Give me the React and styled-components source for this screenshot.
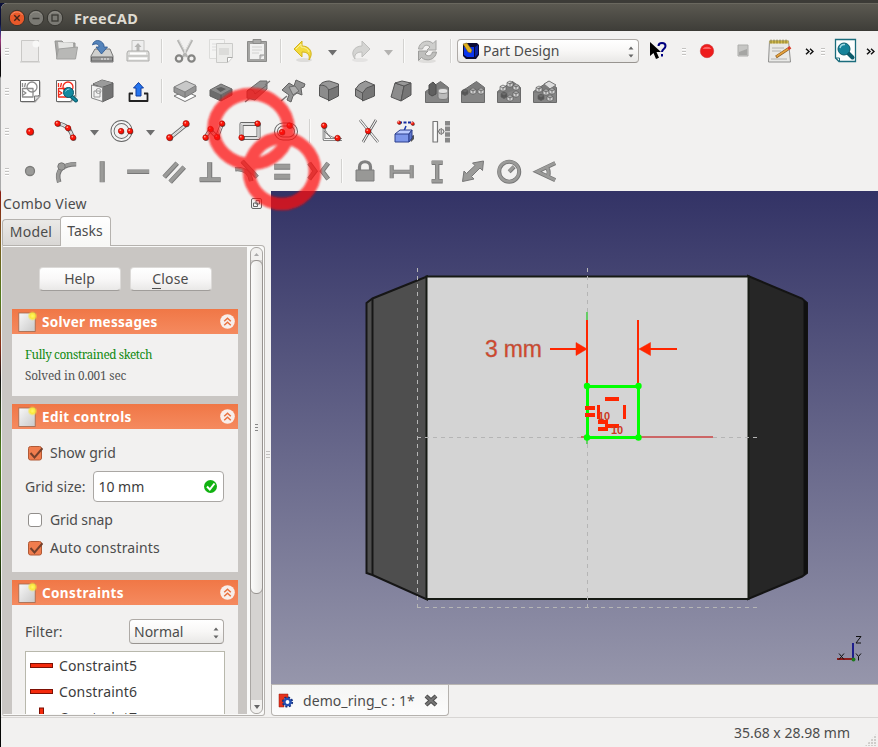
import React from 'react';
import styled, { createGlobalStyle, css } from 'styled-components';

const Global = createGlobalStyle`
  * { box-sizing: border-box; }
  html, body { margin: 0; padding: 0; }
  body { width: 878px; height: 747px; overflow: hidden; background: #f2f1f0; }
  svg { display: block; flex: none; }
`;

const Desktop = styled.div`
  position: relative;
  width: 878px;
  height: 747px;
  padding: 3px 0 0 1px;
  overflow: hidden;
  background: linear-gradient(180deg, #3c3b37 0 3px, #0c1038 3px 24px, #20307a 30px, #a03a80 40px, #090909 62px 76px, #aaa 78px 190px, #8c1c10 192px, #7a5a20 240px, #4f7a1c 300px, #8a3018 345px, #111 380px, #4a7a1a 450px, #3d6b12 520px, #101a08 600px, #050505 747px);
  font-family: "Noto Sans", "Open Sans", sans-serif;
  font-size: 14px;
  color: #4c4c4c;
`;

const Window = styled.div`
  display: flex;
  flex-direction: column;
  width: 877px;
  height: 744px;
  background: #f2f1f0;
  border-radius: 6px 0 0 0;
  overflow: hidden;
`;

const TitleBar = styled.header`
  display: flex;
  align-items: center;
  flex: none;
  height: 28px;
  padding: 0 0 0 7px;
  background: linear-gradient(#5b5951, #3f3e39 96%, #373530);
  border-top: 1px solid #6a685f;
`;

const Title = styled.h1`
  margin: 0 0 0 9px;
  font-size: 14.5px;
  font-weight: 700;
  line-height: 20px;
  letter-spacing: 0.4px;
  color: #dfdbd2;
`;

const Toolbars = styled.div`
  flex: none;
  height: 160px;
`;

const ToolRow = styled.div`
  display: flex;
  align-items: center;
  height: 40px;
`;

const ToolButton = styled.span`
  display: flex;
  flex: none;
  width: ${p => p.$w || 36}px;
  height: 40px;
`;

const Separator = styled.span`
  flex: none;
  width: 2px;
  height: 24px;
  margin: 0 4px 0 5px;
  border-left: 1px solid #d3d2d0;
  border-right: 1px solid #fbfbfa;
`;

const Handle = styled.span`
  flex: none;
  width: 4px;
  height: 8px;
  margin: 2px 3px 0 4px;
  background: repeating-linear-gradient(#c4c3c1 0 1px, #fff 1px 2px, transparent 2px 3px);
`;

const More = styled.span`
  flex: none;
  display: flex;
  align-items: center;
  justify-content: center;
  width: ${p => p.$w}px;
  height: 40px;
  padding-left: ${p => p.$pl || 0}px;
`;

const Combo = styled.div`
  display: flex;
  align-items: center;
  flex: none;
  width: ${p => p.$w}px;
  height: ${p => p.$h}px;
  margin: ${p => p.$m || 0};
  padding: 0 4px;
  gap: 3px;
  border: 1px solid #aeaaa6;
  border-bottom-color: #989490;
  border-radius: 4px;
  background: linear-gradient(#fff, #f8f7f6 50%, #e9e8e6);
`;

const Label = styled.span`
  flex: ${p => (p.$grow ? '1' : 'none')};
  white-space: nowrap;
  line-height: 20px;
  letter-spacing: ${p => p.$ls || 0}px;
  color: ${p => p.$c || '#4c4c4c'};
`;

const Workspace = styled.div`
  display: flex;
  flex: none;
  height: 526px;
`;

const ComboPanel = styled.aside`
  display: flex;
  flex-direction: column;
  flex: none;
  width: 264px;
`;

const PanelTitle = styled.div`
  display: flex;
  justify-content: space-between;
  align-items: center;
  height: 25px;
  padding: 0 2px 0 2px;
`;

const TabStrip = styled.div`
  display: flex;
  align-items: flex-end;
  height: 30px;
  margin-bottom: -1px;
  padding-left: 1px;
`;

const PanelTab = styled.div`
  display: flex;
  justify-content: center;
  align-items: center;
  width: ${p => p.$w}px;
  height: ${p => (p.$active ? 30 : 27)}px;
  padding: 0 1px 2px 0;
  border: 1px solid #b5b2ae;
  border-bottom: 0;
  border-radius: 4px 4px 0 0;
  background: linear-gradient(#eae9e7, #d9d7d5);
  ${p => p.$active && css`
    background: linear-gradient(#fff, #f7f7f5);
    z-index: 1;
  `}
  ${p => !p.$active && css`
    border-right: 0;
    border-radius: 4px 0 0 0;
    border-bottom: 1px solid #b5b2ae;
  `}
`;

const Frame = styled.div`
  display: flex;
  height: 471px;
  margin-left: 1px;
  padding: 1px;
  border: 1px solid #b5b2ae;
  border-left-color: #c8c6c3;
  border-radius: 0 4px 3px 2px;
  background: #f9f9f8;
`;

const ScrollArea = styled.div`
  width: 244px;
  height: 467px;
  margin-right: 3px;
  margin-left: -1px;
  padding: 20px 9px 0;
  overflow: hidden;
  background: #c9c6c3;
`;

const ScrollBar = styled.div`
  display: flex;
  flex-direction: column;
  align-items: center;
  width: 13px;
  height: 467px;
  border: 1px solid #a9a6a3;
  border-radius: 6px;
  background: #d5d3d1;
`;

const ScrollArrow = styled.div`
  display: flex;
  align-items: center;
  justify-content: center;
  width: 11px;
  height: ${p => p.$h}px;
  border-radius: ${p => (p.$up ? '6px 6px 0 0' : '0 0 6px 6px')};
  background: #f2f1ef;
`;

const Thumb = styled.div`
  display: flex;
  align-items: center;
  justify-content: center;
  width: 13px;
  height: 334px;
  border: 1px solid #979390;
  border-radius: 6px;
  background: linear-gradient(90deg, #fbfbfa, #e8e7e5);
`;

const ScrollTrough = styled.div`
  flex: 1;
`;

const Grip = styled.span`
  width: ${p => p.$w || 3}px;
  height: 7px;
  background: repeating-linear-gradient(${p => p.$c || '#777'} 0 1px, transparent 1px 3px);
`;

const ButtonRow = styled.div`
  display: flex;
  gap: 9px;
  margin-bottom: 18px;
  padding-left: 26.5px;
`;

const PushButton = styled.button`
  width: 82px;
  height: 24px;
  padding: 0;
  font: inherit;
  line-height: 20px;
  letter-spacing: ${p => p.$ls || 0}px;
  color: #4c4c4c;
  border: 1px solid #dcdad8;
  border-bottom-color: #a09d9a;
  border-radius: 4px;
  background: linear-gradient(#fff, #f9f8f8 50%, #e9e8e7);
`;

const Mnemonic = styled.span`
  border-bottom: 1px solid #4c4c4c;
`;

const Group = styled.section`
  margin-bottom: 8px;
`;

const GroupHeader = styled.div`
  display: flex;
  align-items: center;
  height: 25px;
  padding: 0 3.5px 0 6px;
  background: linear-gradient(#f07746, #f58a5f);
`;

const GroupTitle = styled.h2`
  flex: 1;
  margin: 0 0 0 5px;
  font-size: 13.5px;
  font-weight: 700;
  line-height: 20px;
  letter-spacing: ${p => p.$ls || 0}px;
  color: #fff;
`;

const GroupBody = styled.div`
  height: ${p => p.$h}px;
  padding: ${p => p.$p};
  background: #f2f1f0;
`;

const Message = styled.p`
  margin: 0;
  font-family: "Noto Serif", "Liberation Serif", serif;
  font-size: 11.8px;
  line-height: 21px;
  letter-spacing: ${p => p.$ls || 0}px;
  color: ${p => p.$c};
`;

const FormRow = styled.div`
  display: flex;
  align-items: center;
  height: ${p => p.$h}px;
  gap: ${p => p.$gap || 0}px;
`;

const Box = styled.span`
  display: block;
  width: 14px;
  height: 14px;
  margin: 0 1px 0 3px;
  border: 1px solid #918e8b;
  border-radius: 3px;
  background: #fff;
`;

const Field = styled.div`
  display: flex;
  align-items: center;
  width: 131px;
  height: 31px;
  padding: 0 6px 0 4px;
  border: 1px solid #aaa7a4;
  border-radius: 4px;
  background: #fff;
`;

const List = styled.div`
  height: 120px;
  width: 200px;
  margin-top: 7px;
  padding: 1px 0 0 4px;
  border: 1px solid #b8b8ac;
  background: #fff;
`;

const Splitter = styled.div`
  display: flex;
  align-items: center;
  justify-content: center;
  flex: none;
  width: 6px;
`;

const MdiArea = styled.main`
  display: flex;
  flex-direction: column;
  width: 607px;
`;

const Viewport = styled.div`
  height: 493px;
  background: linear-gradient(#333366, #9696ab);
`;

const DocTabs = styled.div`
  height: 33px;
  border-top: 1px solid #b9b6b3;
`;

const DocTab = styled.div`
  display: flex;
  align-items: center;
  gap: 9px;
  width: 178px;
  height: 31px;
  padding: 1px 10px 0 6px;
  border: 1px solid #b5b2ae;
  border-top: 0;
  border-radius: 0 0 4px 4px;
  background: linear-gradient(#f5f5f4, #fcfcfc);
`;

const StatusBar = styled.footer`
  display: flex;
  flex: none;
  justify-content: flex-end;
  align-items: center;
  height: 30px;
  border-top: 1px solid #d8d6d4;
`;

const SizeGrip = styled.span`
  align-self: flex-end;
  width: 12px;
  height: 13px;
  margin: 0 1px 1px 15px;
  background: radial-gradient(circle at 1px 1px, #cfcdca 0.9px, transparent 1px) 0 0 / 3px 3px;
  clip-path: polygon(100% 0, 100% 100%, 0 100%);
`;

const Highlight = styled.svg`
  position: absolute;
  left: 200px;
  top: 80px;
  pointer-events: none;
`;

const Ic = ({ children }) => (
  <ToolButton>
    <svg width="36" height="40" viewBox="0 0 36 40" fill="none" strokeLinejoin="round">{children}</svg>
  </ToolButton>
);

const Drop = ({ c = '#6e6e6e' }) => (
  <ToolButton $w={20}>
    <svg width="20" height="40"><path d="M6 19h9l-4.500 5.500z" fill={c} /></svg>
  </ToolButton>
);

const Chevrons = ({ w, pl }) => (
  <More $w={w} $pl={pl}>
    <svg width="9" height="7" fill="none" stroke="#111" strokeWidth="1.500"><path d="M1 .8l3 2.700-3 2.700M5 .8l3 2.700-3 2.700" /></svg>
  </More>
);

const Dot = ({ x, y, r = 2.7 }) => (
  <g>
    <circle cx={x + 0.6} cy={y + 0.8} r={r} fill="#333" opacity=".7" />
    <circle cx={x} cy={y} r={r} fill="#fb1408" stroke="#a00800" strokeWidth=".6" />
    <circle cx={x - 0.7} cy={y - 0.8} r=".9" fill="#ff9c8c" />
  </g>
);

const WindowButton = ({ kind }) => (
  <svg width="19" height="18" viewBox="0 0 19 18" fill="none">
    <circle cx="9" cy="9" r="7.700" fill={kind === 'close' ? '#e9592a' : '#7b7a74'} stroke="#34332e" />
    <path d="M3.500 6a6.500 6.500 0 0 1 11 0" stroke={kind === 'close' ? '#f79a76' : '#99978f'} strokeWidth=".8" />
    {kind === 'close' && <path d="M6.300 6.300l5.400 5.400M11.700 6.300l-5.400 5.400" stroke="#43261a" strokeWidth="1.400" />}
    {kind === 'min' && <path d="M5.500 9.500h7" stroke="#3a3934" strokeWidth="1.300" />}
    {kind === 'max' && <rect x="6" y="6" width="6" height="6" stroke="#3a3934" strokeWidth="1.300" />}
  </svg>
);

const SketchSheet = ({ red }) => (
  <g>
    <path d="M9.500 10.500h19v15l-5 6h-14z" fill="#777" opacity=".6" />
    <path d="M8.500 9.500h19v14l-5 7h-14z" fill="#fff" stroke="#666" />
    <g stroke={red ? '#f22a1a' : '#8c8c8c'} strokeWidth="1.300">
      <circle cx="20" cy="16" r="5" /><path d="M10.500 17.500h10.500v8.500H10.500zM10.500 12v4M13.500 12l-1 4M11 20l3 2-3 2" />
    </g>
    {!red && <path d="M22.500 30v-5h5" fill="#ddd" stroke="#777" />}
  </g>
);

const Magnifier = () => (
  <g>
    <path d="M23 25l5 4.500" stroke="#07596a" strokeWidth="4" strokeLinecap="round" />
    <path d="M23 25l5 4.500" stroke="#1389a0" strokeWidth="2" strokeLinecap="round" />
    <circle cx="20.500" cy="21.500" r="5" fill="#138aa0" stroke="#07596a" />
    <path d="M17.500 20.500a4 4 0 0 1 4-2.500" stroke="#8fd6e2" />
  </g>
);

const Solid = ({ front, side, top }) => (
  <g stroke="#555" strokeWidth="1">
    <path d={front} fill="#8c8c8c" /><path d={side} fill="#767676" /><path d={top} fill="#989898" />
  </g>
);

const Slope = ({ children }) => (
  <g>
    <path d="M6.500 20.500l15-10 8 6v15h-23z" fill="#7c7c7c" stroke="#6a6a6a" />
    <path d="M7 22h9l13-5v14H7z" fill="#858585" />
    {children}
  </g>
);

const Cube = ({ x, y, c = '#d2d2d2' }) => (
  <path d={`M${x} ${y + 1.500}l3-1.500 3 1.500v3.500l-3 1.500-3-1.500zM${x} ${y + 1.500}l3 1.500 3-1.500M${x + 3} ${y + 3}v3.500`} fill={c} stroke="#5e5e5e" strokeWidth=".7" />
);

const Cons = ({ d, w = 3, children }) => (
  <Ic>
    <g strokeLinejoin="miter">
      <path d={d} stroke="#777" strokeWidth={w + 1.6} transform="translate(.2 .2)" />
      <path d={d} stroke="#9b9b99" strokeWidth={w} />
    </g>
    {children}
  </Ic>
);

const ComboArrows = () => (
  <svg width="6" height="14" viewBox="0 0 6 14"><path d="M.5 5.500L3 2.500l2.500 3zM.5 10.500L3 13.500l2.500-3z" fill="#666" /></svg>
);

const PaperIcon = () => (
  <svg width="19" height="23" viewBox="0 0 19 23">
    <defs>
      <linearGradient id="pg" x2="1" y2="1"><stop stopColor="#f8f8f8" /><stop offset="1" stopColor="#c9c9c9" /></linearGradient>
      <radialGradient id="glow"><stop stopColor="#fff96a" /><stop offset=".5" stopColor="#fbe93c" /><stop offset="1" stopColor="#fbe93c" stopOpacity="0" /></radialGradient>
    </defs>
    <rect x=".8" y="3" width="16.400" height="18.500" fill="url(#pg)" stroke="#a0684c" strokeWidth=".8" />
    <circle cx="14.500" cy="6" r="5" fill="url(#glow)" />
  </svg>
);

const CollapseIcon = () => (
  <svg width="15" height="15" viewBox="0 0 15 15" fill="none">
    <circle cx="7.500" cy="7.500" r="7.300" fill="#f8eeea" />
    <path d="M4.200 7.300l3.300-3 3.300 3M4.200 11.300l3.300-3 3.300 3" stroke="#e8713f" strokeWidth="1.500" />
  </svg>
);

const Checked = () => (
  <svg width="18" height="17" viewBox="0 0 18 17" fill="none">
    <rect x="3.500" y="1.500" width="13" height="13.500" rx="2" fill="#f07d4e" stroke="#b05a36" />
    <path d="M5.500 8l4 4.500L17.500 3.200" stroke="#74402c" strokeWidth="2" />
  </svg>
);

const Check = ({ text, on, ls, h }) => (
  <FormRow $h={h} $gap={7}>{on ? <Checked /> : <Box />}<Label $ls={ls}>{text}</Label></FormRow>
);

const TaskGroup = ({ title, ls, h, p, children }) => (
  <Group>
    <GroupHeader><PaperIcon /><GroupTitle $ls={ls}>{title}</GroupTitle><CollapseIcon /></GroupHeader>
    <GroupBody $h={h} $p={p}>{children}</GroupBody>
  </Group>
);

const Constraint = ({ text, vertical }) => (
  <FormRow $h={26} $gap={6}>
    <svg width="23" height="22" viewBox="0 0 23 22">
      {vertical
        ? <rect x="9.500" y="1" width="4" height="20" fill="#f42a0c" stroke="#7d1004" />
        : <rect x=".5" y="8.500" width="22" height="4" fill="#f42a0c" stroke="#7d1004" />}
    </svg>
    <Label $c="#3c3c3c" $ls={0.15}>{text}</Label>
  </FormRow>
);

const FileRow = () => (
  <ToolRow>
    <Handle />
    <Ic><path d="M9.500 9.500h17v21h-17z" fill="#ecebea" stroke="#c9c8c6" /><circle cx="24" cy="13" r="3.500" fill="#f8f8f7" /><path d="M8 31h20" stroke="#c9c9c7" /></Ic>
    <Ic><path d="M7 10h7l2 2h11v15H9z" fill="#a9a9a7" stroke="#949492" /><path d="M10 11l15 1v8H11z" fill="#e5e5e3" /><path d="M10.500 18l19-2-2 12h-19z" fill="#b8b8b6" stroke="#a2a2a0" /></Ic>
    <Ic><path d="M11 18h15l3 7v6H7v-6z" fill="#d0d0ce" stroke="#777" /><path d="M7.500 26h21v4h-21z" fill="#9b9b9b" stroke="#666" /><path d="M17 28h2m1 0h2m1 0h2" stroke="#eee" /><path d="M8.500 14c1-6 9-6 11.500 0v2h3.500L17.500 23 12 16h3c0-3-3-4-6.500-2z" fill="#5584bb" stroke="#2b568d" strokeWidth=".8" /></Ic>
    <Ic><path d="M12 9.500h12v12H12z" fill="#eee" stroke="#c4c4c2" /><path d="M18 12l3.500 4h-2v4h-3v-4h-2z" fill="#b4b4b2" /><path d="M8 20h20l1 2v8H7v-8z" fill="#dededc" stroke="#adadab" /><path d="M10 22.500h16M9 27.500h18" stroke="#fff" strokeWidth="2" /><path d="M8 25h20" stroke="#b5b5b3" /></Ic>
    <Separator />
    <Ic><path d="M11 9l9 17M25 9l-9 17" stroke="#b5b5b3" strokeWidth="2.600" /><path d="M12 9l7 13M24 9l-7 13" stroke="#e2e2e0" /><circle cx="12" cy="27.500" r="3.200" stroke="#858583" strokeWidth="2.200" /><circle cx="24.500" cy="27.500" r="3.200" stroke="#858583" strokeWidth="2.200" /></Ic>
    <Ic><path d="M6.500 8.500h15v19h-15z" fill="#f4f4f3" stroke="#dcdcda" /><path d="M9 13h10M9 16h8M9 19h6" stroke="#ddd" /><path d="M13.500 12.500h16v14l-4.500 5H13.500z" fill="#ececea" stroke="#cbcbc9" /><path d="M16 17h10v7H16z" fill="#dcdcda" /><path d="M24.500 31v-4.500h5" fill="#fff" stroke="#a9a9a7" /></Ic>
    <Ic><path d="M8.500 10.500h19v20h-19z" fill="#a4a4a2" stroke="#8b8b89" /><path d="M11 13h14v15H11z" fill="#f1f1f0" /><path d="M14 8.500h8v4h-8z" fill="#a9a9a7" stroke="#8c8c8a" /><path d="M13 16h10M13 19h10M13 22h7" stroke="#d2d2d0" /><path d="M21 28v-4h4" fill="#ccc" stroke="#999" /></Ic>
    <Separator />
    <Ic><ellipse cx="18" cy="29" rx="8" ry="2" fill="#dddcda" /><path d="M8 18l8-8v5c8 0 12 7 7 14 1-5-1-8-7-8v5z" fill="#f3da3c" stroke="#d2b31c" /><path d="M10 18l5-5v3c4 0 7 2 8 5" stroke="#fbf09a" /></Ic>
    <Drop />
    <Ic><ellipse cx="18" cy="29" rx="8" ry="2" fill="#e4e3e2" /><path d="M28 18l-8-8v5c-8 0-12 7-7 13-1-4 1-7 7-7v5z" fill="#d4d4d2" stroke="#bebebc" /></Ic>
    <Drop c="#b4b3b1" />
    <Separator />
    <Ic><ellipse cx="18" cy="30" rx="9" ry="2" fill="#dfdedc" /><path d="M9.500 18c1-8 10-10 14.500-5.500l3-3v9.500h-9l3-3c-3-3-6-2-7.500 2z" fill="#cececc" stroke="#a6a6a4" /><path d="M27.500 21c-1 8-10 10-15 5.500l-3 3V20h9.500l-3 3c3 3 6.500 2 7.500-2z" fill="#bfbfbd" stroke="#9c9c9a" /></Ic>
    <Separator />
    <Combo $w={182} $h={24} $m="0 1px 0 1px">
      <svg width="18" height="18" viewBox="0 0 18 18"><path d="M1 3l4-2h10l2 2v10l-3 4H4l-3-3z" fill="#0a0a34" /><path d="M2 5h10v10H5l-3-2z" fill="#0a35ee" /><path d="M13 5l3-2v9l-3 3z" fill="#0922a0" /><path d="M1 2l4-1 5 7-1 3-3-1z" fill="#e0b020" stroke="#6d5410" strokeWidth=".5" /></svg>
      <Label $grow>Part Design</Label>
      <ComboArrows />
    </Combo>
    <Ic><path d="M10 11v14l3.500-3 2.500 6 3-1.300-2.500-5.700H21z" fill="#000" /><path d="M18.500 15c0-4 7-4 7 0 0 3-3.500 3-3.500 6M22 23v2.500" stroke="#000080" strokeWidth="2" /></Ic>
    <ToolButton $w={2} />
    <Handle />
    <Ic><circle cx="18" cy="20" r="6.700" fill="#ee1c1c" stroke="#c33" strokeWidth=".6" /><path d="M13.500 18a5 4 0 0 1 9 0z" fill="#ff7474" opacity=".8" /></Ic>
    <Ic><rect x="13" y="14" width="10" height="11" fill="#c6c6c4" stroke="#aeaeac" /><path d="M14 21l8-3v6h-8z" fill="#a6a6a4" /></Ic>
    <Ic><path d="M8.500 10h19l2 21h-22z" fill="#e9e9e7" stroke="#90908e" /><path d="M8.500 9.500h19v3h-19z" fill="#cdb64a" /><path d="M10 8.500v4m3-4v4m3-4v4m3-4v4m3-4v4m3-4v4" stroke="#6d6426" strokeWidth=".7" /><path d="M11 17h12M11 20h9M10 28h16" stroke="#b2b2b0" /><path d="M15 26l12-8" stroke="#89591c" strokeWidth="3" /><path d="M15.500 25.500l11.500-7.500" stroke="#e5a23e" strokeWidth="1.700" /><path d="M27 18l2.500-1.700" stroke="#d8402c" strokeWidth="3" /></Ic>
    <Chevrons w={20} pl={5} />
    <Handle />
    <ToolButton $w={34}><svg width="34" height="40" viewBox="0 0 34 40" fill="none"><path d="M7.500 8.500h20v22H11l-3.500-3.500z" fill="#fdfefe" stroke="#1b6c7c" strokeWidth="1.300" /><path d="M7.500 27h4v4" stroke="#1b6c7c" /><path d="M20 22l4.500 4.500" stroke="#0b5b6b" strokeWidth="4" strokeLinecap="round" /><circle cx="16" cy="18" r="6" fill="#16839a" stroke="#0b5b6b" /><path d="M12 17a4.500 4.500 0 0 1 5-3.500" stroke="#9fd9e4" strokeWidth="1.400" /></svg></ToolButton>
    <Chevrons w={17} />
  </ToolRow>
);

const PartRow = () => (
  <ToolRow>
    <Handle />
    <Ic><SketchSheet /></Ic>
    <Ic><SketchSheet red /><Magnifier /></Ic>
    <Ic><path d="M9 13l9-4 11 3v14l-11 5" fill="#737373" stroke="#5f5f5f" /><path d="M18 16l11-4M9 13l9 3v15" stroke="#4f4f4f" /><path d="M9 13l9-4 11 3-11 4z" fill="#9b9b9b" /><path d="M7.500 14l11 2.500v14L7.500 27z" fill="#f2f2f2" stroke="#888" /><path d="M10 20h6v6h-6z" stroke="#999" /><circle cx="14.500" cy="20" r="2.500" stroke="#999" /></Ic>
    <Ic><path d="M13 22.500H9.500v7.500h18v-7.500H24" stroke="#222" strokeWidth="1.800" /><path d="M18.500 11.500l5 5.500H21v8h-5v-8h-2.500z" fill="#2474ee" stroke="#113da0" /></Ic>
    <Separator />
    <Ic><path d="M7 25l11 5.500L29 25l-11-5z" fill="#fff" stroke="#777" /><path d="M7 16v5l11 5.500L29 20v-5" fill="#959595" stroke="#777" /><path d="M7 16l12-6 10 4.500L18 21z" fill="#c8c8c8" stroke="#808080" /><path d="M18 21v5" stroke="#777" /></Ic>
    <Ic><path d="M7 19v6l11 5 11-6v-6" fill="#6c6c6c" stroke="#606060" /><path d="M7 19l11-6 11 5-11 6z" fill="#8b8b8b" stroke="#6a6a6a" /><path d="M13 17.500l4.500 3.500 5.500-3-5-2z" fill="#5e5e5e" /><path d="M18 24v6" stroke="#555" /></Ic>
    <Ic><path d="M8 20l13-10h7v8L16 29l-8-2z" fill="#929292" stroke="#6b6b6b" /><path d="M8 20c3-3 7-1 8 3l12-9" stroke="#666" /><path d="M6 31l5-4M26 14l5-4" stroke="#777" strokeWidth="1.300" /></Ic>
    <Ic><path d="M7 19l7-7 5 3 2-6 9 4-1 3-3 1 1 7-5-2-4 3-2 6-4-2 2-5z" fill="#929292" stroke="#626262" /><path d="M14 16l6-1 4 5-6 4z" fill="#adadad" stroke="#6c6c6c" /><path d="M6 30l6-5" stroke="#777" strokeWidth="1.600" /></Ic>
    <Ic><Solid front="M8.500 17c0-5 5-4 9 0v12l-9-4z" side="M17.500 18l10-4v11l-10 5z" top="M8.500 15c1-3 5-5 10-5l9 3v2l-10 4c-1-4-7-6-9-4z" /></Ic>
    <Ic><Solid front="M8.500 18l7 3v8l-7-4z" side="M15.500 21l4-5 8-2v11l-12 5z" top="M8.500 18l4-5 6-3 9 4-8 3-4 5z" /></Ic>
    <Ic><Solid front="M12 12l9 3-3 15-10-4z" side="M21 15l7-3v12l-10 6z" top="M12 12l7-2 9 2-7 3z" /></Ic>
    <Ic><Slope><path d="M10 14l4-3 3 3v9l-4 2-3-2z" fill="#606060" stroke="#4c4c4c" /><path d="M19 20v6a5 2.500 0 0 0 10 0v-6" fill="#bbb" stroke="#777" /><ellipse cx="24" cy="20" rx="5" ry="2.500" fill="#e0e0e0" stroke="#888" /></Slope></Ic>
    <Ic><Slope><Cube x={7} y={18} c="#555" /><Cube x={15} y={17} /><Cube x={23} y={17} /></Slope></Ic>
    <Ic><Slope><Cube x={16} y={10} /><Cube x={9} y={14} /><Cube x={22} y={13} /><Cube x={10} y={21} c="#555" /><Cube x={22} y={20} /><Cube x={16} y={24} /></Slope></Ic>
    <Ic><Slope><path d="M17 13l5-3 7 4-6 4z" fill="#ddd" stroke="#777" /><Cube x={9} y={15} /><Cube x={16} y={18} /><Cube x={11} y={23} c="#555" /><Cube x={22} y={17} /><Cube x={20} y={24} /></Slope></Ic>
  </ToolRow>
);

const Tube = ({ d }) => (
  <g><path d={d} stroke="#666" strokeWidth="4" /><path d={d} stroke="#f5f5f5" strokeWidth="2.200" /><path d={d} stroke="#aaa" strokeWidth=".6" /></g>
);

const GeometryRow = () => (
  <ToolRow>
    <Handle />
    <Ic><Dot x={18} y={20.500} r={3.500} /></Ic>
    <Ic><Tube d="M10 12.500c8 1 13 6 15 15" /><Dot x={9.500} y={12.500} /><Dot x={20} y={17} /><Dot x={25} y={26.500} /></Ic>
    <Drop />
    <Ic><circle cx="17.500" cy="20" r="9" stroke="#666" strokeWidth="4" /><circle cx="17.500" cy="20" r="9" stroke="#f4f4f4" strokeWidth="2.200" /><Dot x={17} y={20} /><Dot x={26} y={20} /></Ic>
    <Drop />
    <Ic><Tube d="M10 27l16-13" /><Dot x={9.500} y={26.500} r={3} /><Dot x={26} y={12.500} r={3} /></Ic>
    <Ic><Tube d="M9 27l5-8 7 7 5-13" /><Dot x={9.500} y={26.500} /><Dot x={14.500} y={18} /><Dot x={21} y={26} /><Dot x={26} y={12.500} /></Ic>
    <Ic><Tube d="M9.500 13h17v14h-17z" /><Dot x={9.500} y={26.500} /><Dot x={25.500} y={12.500} /></Ic>
    <Ic><rect x="8" y="13.500" width="20" height="14" rx="7" stroke="#666" strokeWidth="4" /><rect x="8" y="13.500" width="20" height="14" rx="7" stroke="#f3f3f3" strokeWidth="2" /><Dot x={14} y={21} /><Dot x={21.500} y={14.500} /></Ic>
    <Separator />
    <Ic><path d="M9 12v16.500h18" stroke="#666" strokeWidth="2.600" /><path d="M9 12v16.500h18" stroke="#f4f4f4" strokeWidth="1" /><path d="M9 14c1 8 6 13 14 13M9 20l7 7" stroke="#777" strokeWidth=".9" /><Dot x={9} y={14.500} /><Dot x={22.500} y={27} /></Ic>
    <Ic><path d="M9 9l18 22M25 9L12 31" stroke="#555" strokeWidth="2.600" /><path d="M9 9l18 22M25 9L12 31" stroke="#f4f4f4" strokeWidth="1.200" /><Dot x={17} y={20} /></Ic>
    <Ic><path d="M12 11.500h14" stroke="#132ba0" strokeWidth="1.800" strokeDasharray="3 1.500" /><Dot x={12} y={11.500} r={1.600} /><Dot x={25.500} y={12.500} r={1.600} /><path d="M19 15l-2 5" stroke="#1837b0" strokeWidth="1.500" /><path d="M22 26l5-2v4l-3 3z" fill="#555" /><path d="M8 23v8h14v-8" fill="#7d96ea" stroke="#2c3f8c" /><path d="M8 23l5-4h12l-3 4z" fill="#b9c9ff" stroke="#2c3f8c" /><path d="M22 23l3-4v8l-3 4z" fill="#6078cf" stroke="#2c3f8c" /></Ic>
    <Ic><path d="M10 10.500h4.500v20.500H10z" fill="#fafafa" stroke="#777" strokeWidth="1.200" /><path d="M24.500 10v21.500" stroke="#888" strokeWidth="5" strokeDasharray="4.600 1" /><path d="M17 18l-1.500 2.500L17 23M19.500 18l1.500 2.500-1.500 2.500M18.200 17v7" stroke="#777" strokeWidth="1.200" /></Ic>
  </ToolRow>
);

const ConstraintRow = () => (
  <ToolRow>
    <Handle />
    <Ic><circle cx="18" cy="20" r="4.500" fill="#9b9b99" stroke="#7c7c7a" strokeWidth="1.300" /></Ic>
    <Cons d="M11 31c-4-12 4-18 17-18"><circle cx="13.500" cy="15.500" r="3.700" fill="#9b9b99" stroke="#777" /></Cons>
    <Cons d="M18 10v21" w={3.500} />
    <Cons d="M7 20.500h22" w={3} />
    <Cons d="M8 26l13-14M14 31l14-15" w={3.300} />
    <Cons d="M17.500 11v16M7.500 28.500h21" w={3.500} />
    <Cons d="M7 18c10-1 15 5 16 12M14 10l15 16" w={3} />
    <Cons d="M10 15.500h16M10 25.500h16" w={4.500} />
    <Cons d="M9 12l6 8-6 8M28 12l-6 8 6 8" w={3} />
    <Separator />
    <Ic><path d="M12.500 19v-3c0-7 11-7 11 0v3" stroke="#808080" strokeWidth="3.200" /><path d="M9 19h18v11H9z" fill="#989896" stroke="#7c7c7c" /></Ic>
    <Cons d="M8.500 14v13M28.500 14v13M8 20.500h20" w={2.500} />
    <Cons d="M12.500 11.500h11M12.500 30h11M18 12v18" w={2.800} />
    <Ic><path d="M28.500 10l-1 9.500-2.500-2.500-8.500 8.500 2.500 2.500-11.500 2.500 1.500-10.500 2.500 2.500 8.500-8-2.500-2.500z" fill="#9b9b99" stroke="#777" /></Ic>
    <Cons d="M28 20.500a10 10 0 1 1-20 0a10 10 0 1 1 20 0M18 20.500l5-5" w={2.500} />
    <Cons d="M28 12L10 20.500l18 8.500M20 16.500q2.500 4 1 8.500" w={2.500} />
  </ToolRow>
);

const Model = () => (
  <svg width="607" height="493" viewBox="271 191 607 493" fill="none">
    <path d="M366.500 303l6-4.500 54.500-22v323l-54.500-24.500-6-2z" fill="#4e4e4e" stroke="#161616" strokeWidth="2" />
    <path d="M372.500 299v276" stroke="#161616" strokeWidth="2" />
    <path d="M748 276l54 22.500 5 4.500v270l-5 3.500-54 22.500z" fill="#262626" stroke="#141414" strokeWidth="2" />
    <path d="M803.500 300v275l4-3V303z" fill="#101010" />
    <path d="M426.500 276.500h322v322.500h-322z" fill="#d4d4d4" stroke="#161a14" strokeWidth="2" />
    <path d="M417.500 268v339M587.500 268v339M417 437.500h341M417 607.500h341" stroke="#b5b5b5" strokeDasharray="4 4" />
    <path d="M587 312v132" stroke="#66cc66" strokeWidth="2" />
    <path d="M581 437h132" stroke="#cc6666" strokeWidth="2" />
    <g stroke="#ff2600" strokeWidth="2">
      <path d="M587 320v66M638 320v66M550 349h30M645 349h32" />
      <path d="M587 349l-11-6.500v13zM639 349l11.500-6.500v13z" fill="#ff2600" strokeWidth=".5" />
    </g>
    <path d="M587.500 386.500h51v51h-51z" stroke="#00ff00" strokeWidth="3" />
    <g fill="#00ff00">{[[587, 386], [638.5, 386], [587, 437.5], [638.5, 437.5]].map(([x, y]) => <circle key={x + '-' + y} cx={x} cy={y} r="3.200" />)}</g>
    <path d="M605 399h14M605 426h14M585 408h10M585 415h10M598 422h10M598 429h10" stroke="#ff2600" strokeWidth="4" />
    <path d="M598.500 405v14M624.500 405v14" stroke="#ff2600" strokeWidth="3" />
    <g fontFamily="'Liberation Sans', sans-serif" fill="#cc3a1e">
      <text x="485" y="356.500" fontSize="23" textLength="57" fill="#dc4326" stroke="#9a6a60" strokeWidth=".35">3 mm</text>
      <text x="598" y="420" fontSize="11" textLength="12" fontWeight="700">10</text>
      <text x="611" y="434" fontSize="11" textLength="12" fontWeight="700">10</text>
    </g>
    <path d="M837 659h15" stroke="#8c1c1c" strokeWidth="2" />
    <path d="M853 643v15" stroke="#1e1e8c" strokeWidth="2" />
    <circle cx="853.500" cy="659.500" r="2" fill="#1e7a1e" />
    <path d="M839 653.500l5 6M844 653.500l-5 6M856 653.500l2.500 3 2.500-3M858.500 656.500v4M856 636.500h5l-5 6.500h5" stroke="#111" />
  </svg>
);

export default function App() {
  return (
    <Desktop>
      <Global />
      <Window>
        <TitleBar>
          <WindowButton kind="close" /><WindowButton kind="min" /><WindowButton kind="max" />
          <Title>FreeCAD</Title>
        </TitleBar>
        <Toolbars>
          <FileRow /><PartRow /><GeometryRow /><ConstraintRow />
        </Toolbars>
        <Workspace>
          <ComboPanel>
            <PanelTitle>
              <Label $ls={0.2}>Combo View</Label>
              <svg width="12" height="12" viewBox="0 0 12 12" fill="none" stroke="#666"><rect x=".5" y=".5" width="10" height="10" rx="1.500" /><path d="M5 2.500h3.500V6H5zM2.500 5h4v3.500h-4z" /></svg>
            </PanelTitle>
            <TabStrip>
              <PanelTab $w={58}><Label $ls={0.2}>Model</Label></PanelTab>
              <PanelTab $w={51} $active><Label>Tasks</Label></PanelTab>
            </TabStrip>
            <Frame>
              <ScrollArea>
                <ButtonRow>
                  <PushButton>Help</PushButton>
                  <PushButton $ls={0.15}><Mnemonic>C</Mnemonic>lose</PushButton>
                </ButtonRow>
                <TaskGroup title="Solver messages" ls={0.28} h={62} p="10px 13px">
                  <Message $c="#118a11" $ls={-0.41}>Fully constrained sketch</Message>
                  <Message $c="#555" $ls={-0.18}>Solved in 0.001 sec</Message>
                </TaskGroup>
                <TaskGroup title="Edit controls" ls={0.4} h={143} p="10px 13px">
                  <Check on h={28} text="Show grid" />
                  <FormRow $h={39} $gap={8}>
                    <Label>Grid size:</Label>
                    <Field>
                      <Label $grow $c="#3c3c3c">10 mm</Label>
                      <svg width="13" height="13" viewBox="0 0 13 13" fill="none"><circle cx="6.500" cy="6.500" r="6.500" fill="#11b211" /><path d="M3 6.500l2.800 3L10.500 3.500" stroke="#fff" strokeWidth="2" /></svg>
                    </Field>
                  </FormRow>
                  <Check h={28} text="Grid snap" ls={-0.1} />
                  <Check on h={28} text="Auto constraints" ls={0.13} />
                </TaskGroup>
                <TaskGroup title="Constraints" ls={0.38} h={160} p="14px 13px">
                  <FormRow $h={25}>
                    <Label $grow $ls={0.1}>Filter:</Label>
                    <Combo $w={95} $h={25} $m="0 1px 0 0"><Label $grow>Normal</Label><ComboArrows /></Combo>
                  </FormRow>
                  <List>
                    <Constraint text="Constraint5" /><Constraint text="Constraint6" /><Constraint text="Constraint7" vertical />
                  </List>
                </TaskGroup>
              </ScrollArea>
              <ScrollBar>
                <ScrollArrow $up $h={12}><svg width="5" height="3"><path d="M0 3l2.500-3L5 3z" fill="#aaa" /></svg></ScrollArrow>
                <Thumb><Grip $c="#888" /></Thumb>
                <ScrollTrough />
                <ScrollArrow $h={13}><svg width="6" height="4"><path d="M0 0h6L3 4z" fill="#666" /></svg></ScrollArrow>
              </ScrollBar>
            </Frame>
          </ComboPanel>
          <Splitter><Grip $w={4} $c="#c2c0be" /></Splitter>
          <MdiArea>
            <Viewport><Model /></Viewport>
            <DocTabs>
              <DocTab>
                <svg width="16" height="16" viewBox="0 0 16 16" fill="none"><path d="M1 1h9v4H6v2h3v4H6v3H1z" fill="#e6321c" stroke="#8c1a0c" strokeWidth=".5" /><circle cx="9.500" cy="9" r="4.600" stroke="#16307c" strokeWidth="2" strokeDasharray="2 1.600" /><circle cx="9.500" cy="9" r="3.100" fill="#fff" stroke="#2450b4" strokeWidth="2.400" /></svg>
                <Label $grow $ls={0.07}>demo_ring_c : 1*</Label>
                <svg width="14" height="13" viewBox="0 0 14 13"><path d="M2 2l10 9M12 2L2 11" stroke="#4e4e4e" strokeWidth="4.200" /><path d="M2 2l10 9M12 2L2 11" stroke="#767676" strokeWidth="2" /></svg>
              </DocTab>
            </DocTabs>
          </MdiArea>
        </Workspace>
        <StatusBar><Label>35.68 x 28.98 mm</Label><SizeGrip /></StatusBar>
      </Window>
      <Highlight width="130" height="140" viewBox="200 80 130 140" fill="none">
        <defs><filter id="soft" x="-20%" y="-20%" width="140%" height="140%"><feGaussianBlur stdDeviation="1" /></filter></defs>
        <g opacity=".73" stroke="#ff0a0a" strokeWidth="12.500" filter="url(#soft)">
          <ellipse cx="251" cy="129" rx="37.500" ry="35" />
          <ellipse cx="282" cy="171" rx="33" ry="33" />
        </g>
      </Highlight>
    </Desktop>
  );
}
